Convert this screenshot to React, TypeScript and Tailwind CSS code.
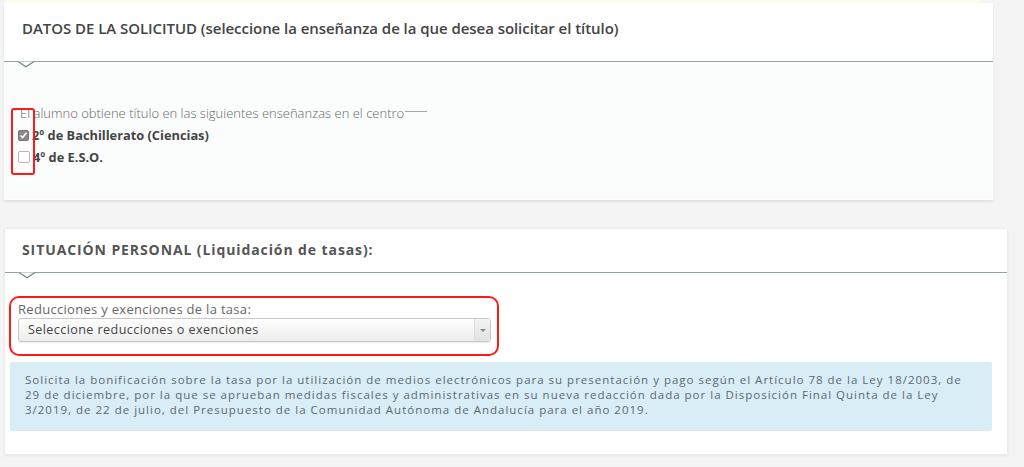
const Notch = () => (
  <svg className="absolute left-[14px] top-[-1px]" width="16" height="7" viewBox="0 0 16 7">
    <path d="M0 0.5 L8 5.8 L16 0.5" fill="#fbfdfd" stroke="#6f8a7c" strokeWidth="1.2" />
  </svg>
);

const Box = ({ checked }: { checked?: boolean }) =>
  checked ? (
    <span className="w-[11px] h-[11px] bg-[#8a8a8a] border border-[#7a7a7a] rounded-[2px] flex items-center justify-center">
      <svg width="9" height="9" viewBox="0 0 9 9">
        <path d="M1.5 4.5 L3.6 6.6 L7.5 1.8" fill="none" stroke="#fff" strokeWidth="1.6" />
      </svg>
    </span>
  ) : (
    <span className="w-[12px] h-[12px] bg-white border border-[#b8b8b8] rounded-[2px]" />
  );

const App = () => {
  return (
    <div className="w-[1024px] h-[467px] bg-[#f4f4f4] overflow-hidden pl-[4px] font-['Open_Sans',sans-serif]">
      <div className="h-[3px] w-[976px] bg-[#fdfbea]" />
      <div className="relative w-[989px] h-[197px] bg-white shadow-[0_2px_2px_rgba(0,0,0,0.08)]">
        <div className="h-[59px] pl-[18px] pt-[14px] border-b border-[#8fa89b]">
          <h2 className="text-[15px] leading-[22px] font-semibold text-[#444] tracking-[-0.05px]">
            DATOS DE LA SOLICITUD (seleccione la enseñanza de la que desea solicitar el título)
          </h2>
        </div>
        <div className="relative bg-[#fbfdfd] h-[137px] pl-[16px] pt-[43px]">
          <Notch />
          <div className="flex items-center text-[13px] text-[#666] font-light leading-[16px]">
            <span>El alumno obtiene título en las siguientes enseñanzas en el centro</span>
            <span className="w-[22px] h-px bg-[#9aa] ml-[1px] -mt-[4px]" />
          </div>
          <div className="flex items-center gap-[3px] mt-[6px] ml-[-2px] text-[12.8px] font-bold text-[#444] leading-[16px]">
            <Box checked />
            <span>2º de Bachillerato (Ciencias)</span>
          </div>
          <div className="flex items-center gap-[3px] mt-[6px] ml-[-2px] text-[12.8px] font-bold text-[#444] leading-[16px]">
            <Box />
            <span>4º de E.S.O.</span>
          </div>
          <div className="absolute left-[7px] top-[46px] w-[24px] h-[67px] border-2 border-[#ff1a1a] rounded-[3px]" />
        </div>
      </div>

      <div className="relative mt-[28px] w-[1004px] h-[227px] bg-white border border-[#ececec] shadow-[0_1px_2px_rgba(0,0,0,0.06)]">
        <div className="h-[44px] pl-[17px] pt-[11px] border-b border-[#8fa89b]">
          <h2 className="text-[14px] leading-[20px] font-bold text-[#555] tracking-[0.9px]">
            SITUACIÓN PERSONAL (Liquidación de tasas):
          </h2>
        </div>
        <div className="relative pt-[23px]">
          <Notch />
          <div className="ml-[4px] w-[490px] h-[60px] border-2 border-[#ff1a1a] rounded-[10px] pl-[7px] pr-[6px] pt-[4px]">
            <div className="text-[13px] text-[#666] leading-[14px] tracking-[0.3px]">
              Reducciones y exenciones de la tasa:
            </div>
            <div className="mt-[2px] h-[24px] flex items-center border border-[#c8c8c8] rounded-[3px] bg-gradient-to-b from-white to-[#ececec] shadow-[0_1px_1px_rgba(0,0,0,0.08)]">
              <span className="flex-1 pl-[9px] text-[12.6px] text-[#444] tracking-[0.4px]">
                Seleccione reducciones o exenciones
              </span>
              <span className="w-[16px] h-full border-l border-[#ddd] flex items-center justify-center bg-gradient-to-b from-[#f4f4f4] to-[#e2e2e2]">
                <span className="w-0 h-0 border-l-[3px] border-r-[3px] border-t-[3px] border-l-transparent border-r-transparent border-t-[#888]" />
              </span>
            </div>
          </div>
          <div className="mt-[6px] ml-[5px] w-[982px] h-[69px] bg-[#d9edf7] rounded-[2px] pl-[15px] pt-[10px] text-[11.5px] leading-[15px] tracking-[1px] text-[#5d6870] whitespace-nowrap">
            Solicita la bonificación sobre la tasa por la utilización de medios electrónicos para su presentación y pago según el Artículo 78 de la Ley 18/2003, de
            <br />
            29 de diciembre, por la que se aprueban medidas fiscales y administrativas en su nueva redacción dada por la Disposición Final Quinta de la Ley
            <br />
            3/2019, de 22 de julio, del Presupuesto de la Comunidad Autónoma de Andalucía para el año 2019.
          </div>
        </div>
      </div>
    </div>
  );
};

export default App;
